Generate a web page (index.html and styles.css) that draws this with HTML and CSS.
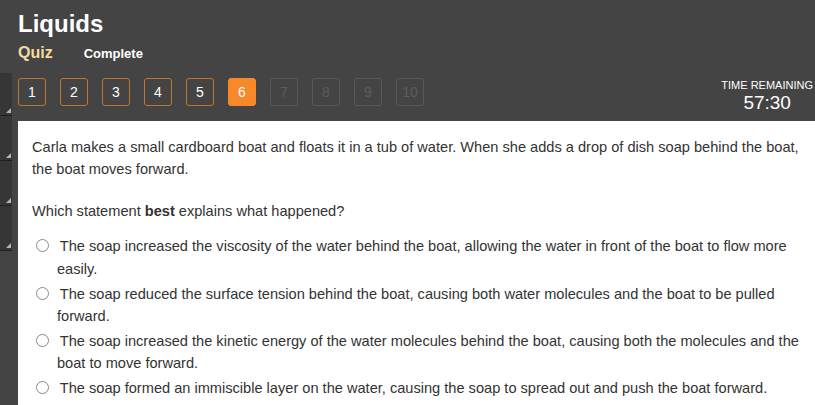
FILE: index.html
```html
<!DOCTYPE html>
<html>
<head>
<meta charset="utf-8">
<link rel="stylesheet" href="styles.css">
</head>
<body>
<header class="header">
  <h1 class="title">Liquids</h1>
  <div class="subtitle">
    <span class="kind">Quiz</span>
    <span class="status">Complete</span>
  </div>
</header>
<div class="layout">
  <aside class="sidebar">
    <div class="tile"></div>
    <div class="tile"></div>
    <div class="tile"></div>
    <div class="tile"></div>
  </aside>
  <main class="main">
    <div class="navrow">
      <nav class="pager">
        <span class="pg">1</span>
        <span class="pg">2</span>
        <span class="pg">3</span>
        <span class="pg">4</span>
        <span class="pg">5</span>
        <span class="pg current">6</span>
        <span class="pg disabled">7</span>
        <span class="pg disabled">8</span>
        <span class="pg disabled">9</span>
        <span class="pg disabled">10</span>
      </nav>
      <div class="timer">
        <div class="timer-label">TIME REMAINING</div>
        <div class="timer-value">57:30</div>
      </div>
    </div>
    <section class="panel">
      <p class="stem">Carla makes a small cardboard boat and floats it in a tub of water. When she adds a drop of dish soap behind the boat, the boat moves forward.</p>
      <p class="prompt">Which statement <b>best</b> explains what happened?</p>
      <div class="options">
        <div class="option"><span class="radio"></span> The soap increased the viscosity of the water behind the boat, allowing the water in front of the boat to flow more easily.</div>
        <div class="option"><span class="radio"></span> The soap reduced the surface tension behind the boat, causing both water molecules and the boat to be pulled forward.</div>
        <div class="option"><span class="radio"></span> The soap increased the kinetic energy of the water molecules behind the boat, causing both the molecules and the boat to move forward.</div>
        <div class="option"><span class="radio"></span> The soap formed an immiscible layer on the water, causing the soap to spread out and push the boat forward.</div>
      </div>
    </section>
  </main>
</div>
</body>
</html>
```

FILE: styles.css
```css
* { box-sizing: border-box; }
html, body { margin: 0; padding: 0; }
body {
  background: #444444;
  font-family: "Liberation Sans", Arial, sans-serif;
  color: #fff;
  overflow: hidden;
}
.header {
  padding: 10px 18px 9px;
}
.title {
  margin: 0;
  font-size: 24px;
  line-height: 28px;
  font-weight: bold;
  color: #fff;
}
.subtitle {
  margin-top: 5px;
  line-height: 20px;
  display: flex;
  align-items: baseline;
  gap: 31px;
}
.kind {
  font-size: 16px;
  font-weight: bold;
  color: #f3dba1;
}
.status {
  font-size: 13px;
  font-weight: bold;
  color: #fff;
}
.layout {
  display: flex;
}
.sidebar {
  width: 12px;
  flex: none;
  display: flex;
  flex-direction: column;
}
.tile {
  position: relative;
  height: 45px;
  background: #363636;
  border-bottom: 1px solid #1f1f1f;
}
.tile:first-child { height: 43px; }
.tile::after {
  content: "";
  position: absolute;
  right: 1px;
  bottom: 2px;
  width: 0;
  height: 0;
  border-left: 5px solid transparent;
  border-bottom: 5px solid #b5b5b5;
}
.main {
  flex: 1;
  margin-left: 6px;
  min-width: 0;
}
.navrow {
  height: 48px;
  display: flex;
  justify-content: space-between;
  padding: 5px 2px 0 0;
}
.pager {
  display: flex;
  gap: 14px;
  align-items: flex-start;
}
.pg {
  width: 28px;
  height: 28px;
  border: 1px solid #bf7631;
  border-radius: 3px;
  display: flex;
  align-items: center;
  justify-content: center;
  font-size: 14px;
  color: #fff;
}
.pg.current {
  background: #f7892a;
  border-color: #f7892a;
}
.pg.disabled {
  border-color: #585858;
  color: #5c5c5c;
}
.timer {
  text-align: center;
  color: #fff;
}
.timer-label {
  font-size: 11px;
  line-height: 14px;
}
.timer-value {
  font-size: 19px;
  line-height: 22px;
}
.panel {
  background: #fff;
  color: #333;
  padding: 15px 9px 20px 14px;
  font-size: 14.6px;
  line-height: 22.4px;
  min-height: 300px;
}
.panel p { margin: 0; }
.stem { margin-bottom: 19px !important; }
.prompt { margin-bottom: 13px !important; }
.option {
  padding-left: 25px;
  text-indent: -21px;
  margin-bottom: 2.5px;
}
.radio {
  display: inline-block;
  width: 13px;
  height: 13px;
  border: 1px solid #8a8a8a;
  border-radius: 50%;
  vertical-align: -1px;
  margin-right: 7px;
  text-indent: 0;
}
```
